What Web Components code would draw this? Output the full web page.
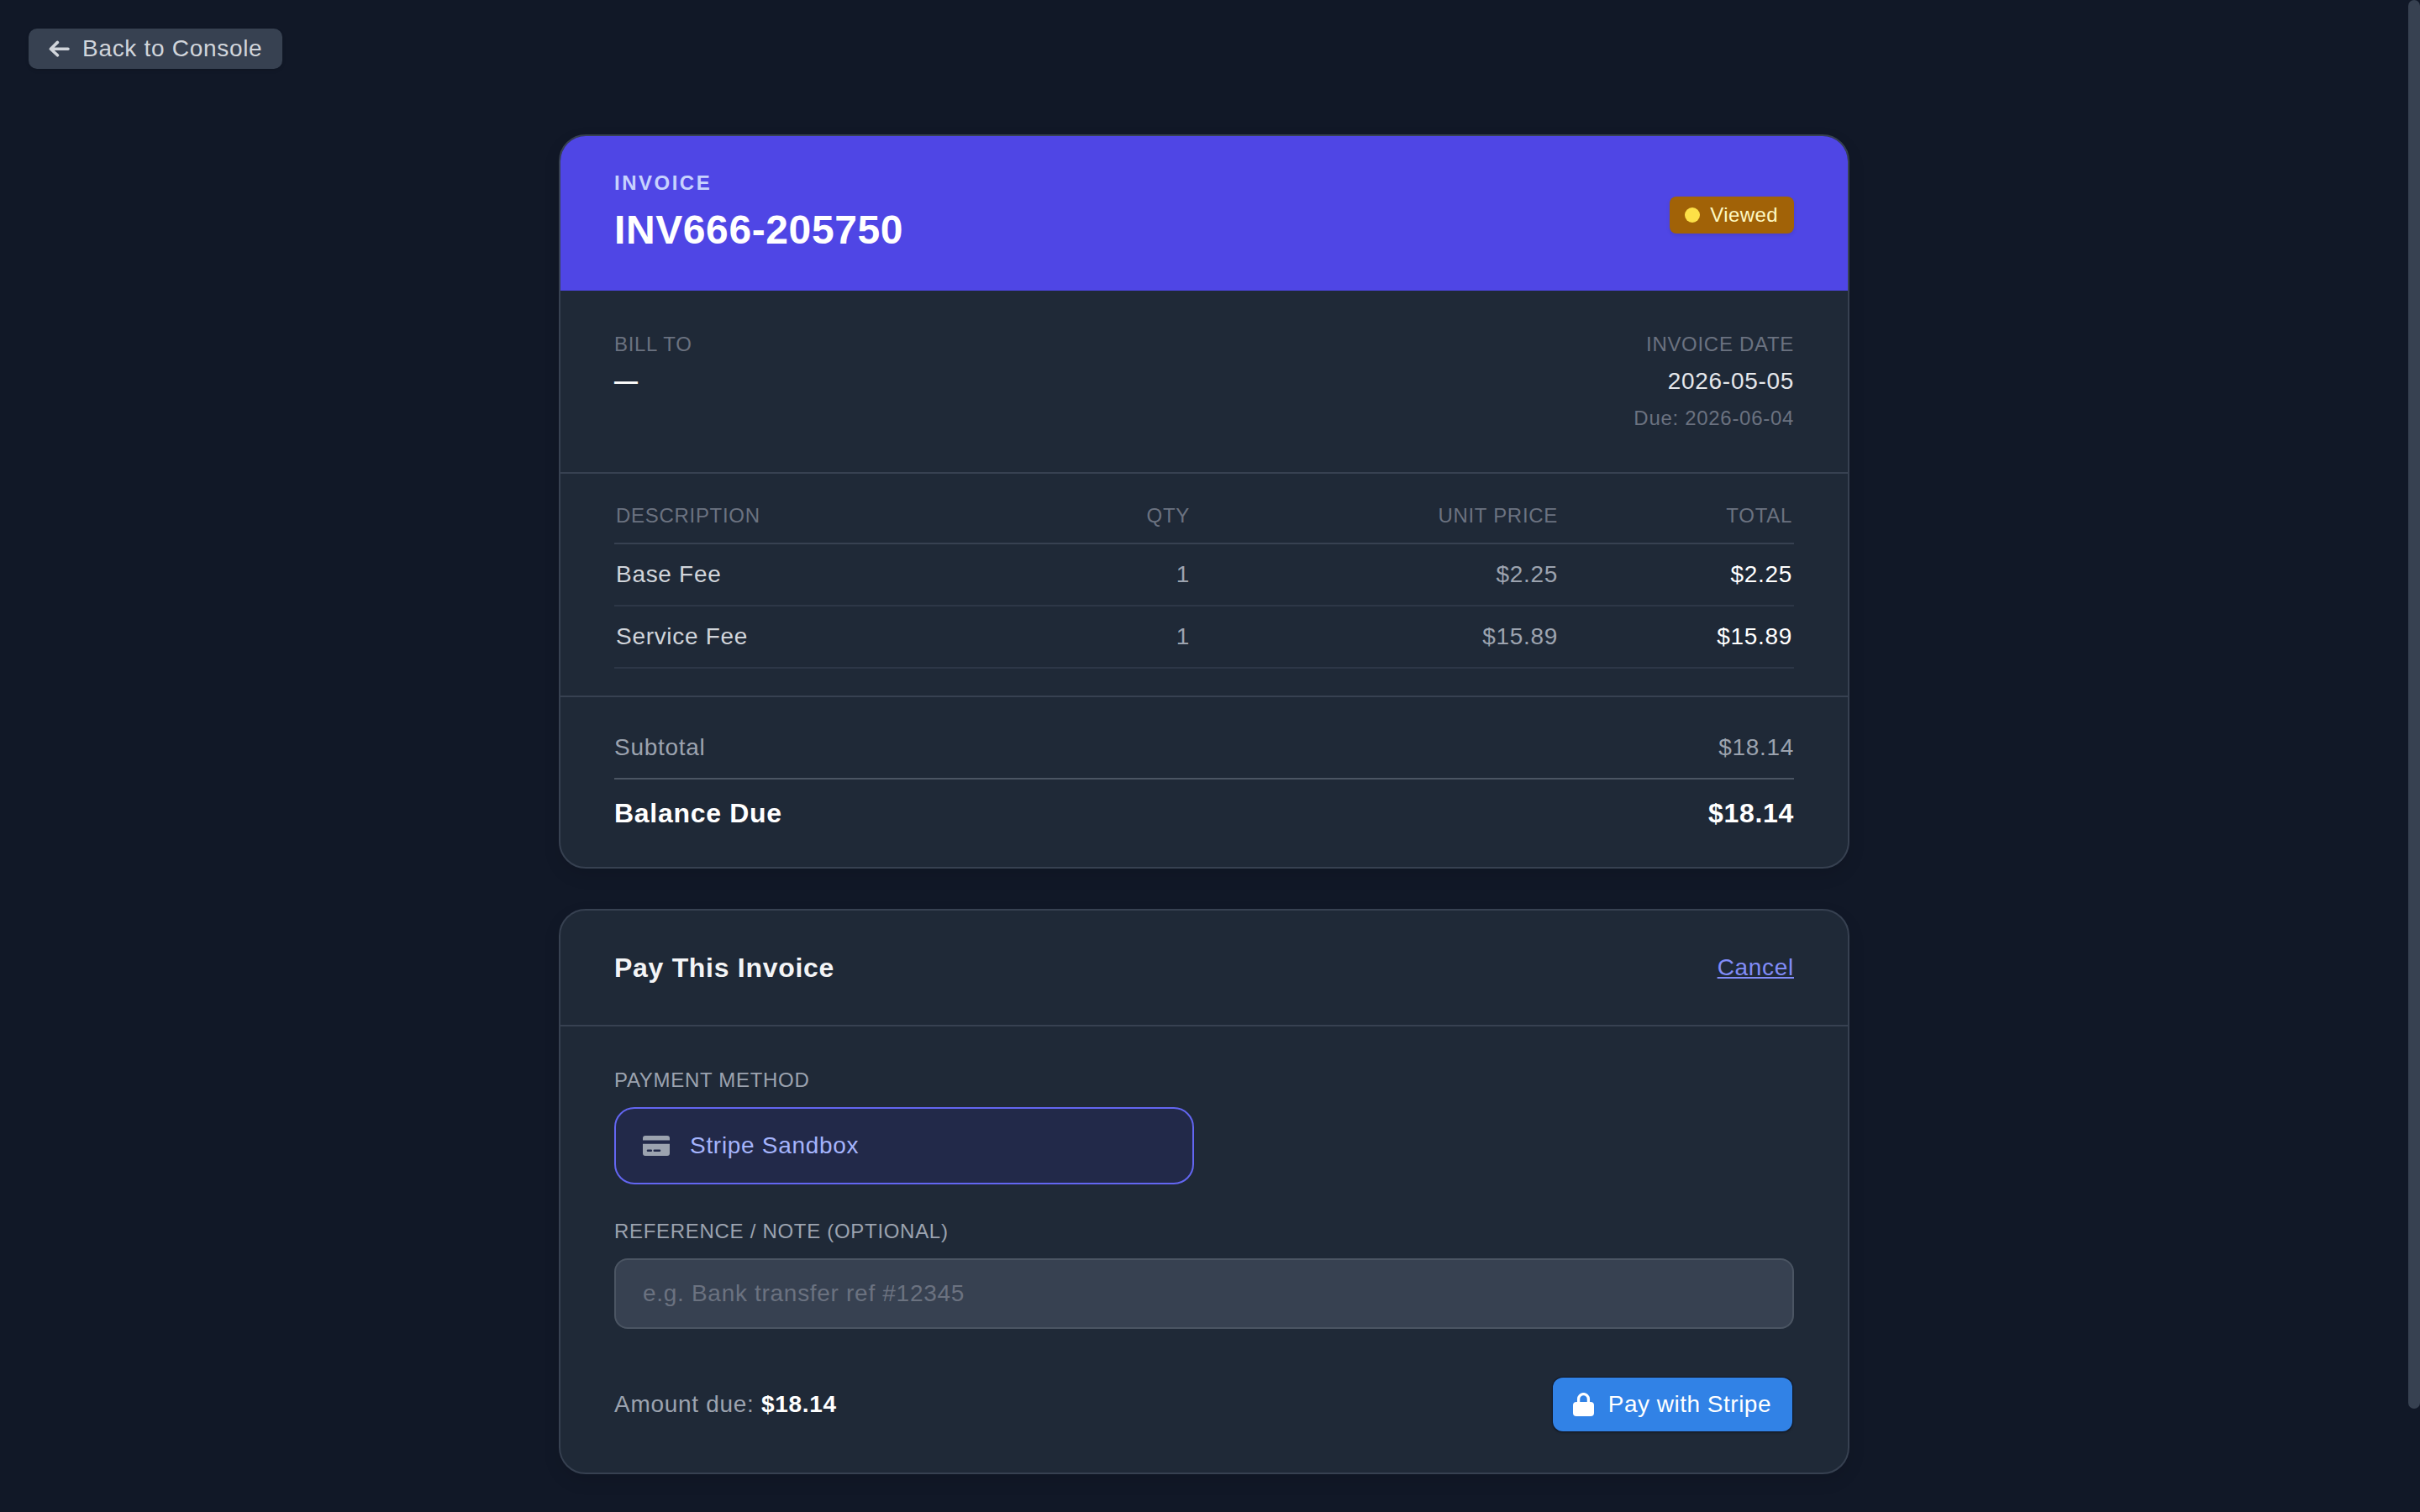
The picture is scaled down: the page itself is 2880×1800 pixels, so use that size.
<!DOCTYPE html>
<html lang="en">
<head>
<meta charset="utf-8">
<title>Invoice INV666-205750</title>
<style>
  html, body { margin: 0; height: 100%; overflow: hidden; background: #111827; }
  body { font-family: "Liberation Sans", Arial, sans-serif; color: #d1d5db; letter-spacing: 0.7px; }
</style>
</head>
<body>
<invoice-page>
  <back-link slot="back">Back to Console</back-link>

  <invoice-card number="INV666-205750" status="Viewed">
    <bill-summary date="2026-05-05" due="2026-06-04"></bill-summary>
    <line-table>
      <line-row desc="Base Fee" qty="1" price="$2.25" total="$2.25"></line-row>
      <line-row desc="Service Fee" qty="1" price="$15.89" total="$15.89"></line-row>
    </line-table>
    <invoice-totals subtotal="$18.14" balance="$18.14"></invoice-totals>
  </invoice-card>

  <pay-panel amount="$18.14">
    <pay-method>Stripe Sandbox</pay-method>
  </pay-panel>
</invoice-page>

<script>
const ICONS = {
  arrow: `<svg width="25" height="20" viewBox="0 0 25 20" fill="none" stroke="currentColor" stroke-width="3.6" stroke-linecap="round" stroke-linejoin="round" aria-hidden="true"><path d="M23 10.2H3.2M10.4 2.4 2.4 10.2l8 7.6"/></svg>`,
  card: `<svg width="32" height="24" viewBox="0 0 32 24" fill="currentColor" aria-hidden="true"><path d="M3 0h26a3 3 0 0 1 3 3v2.4H0V3a3 3 0 0 1 3-3z"/><path fill-rule="evenodd" d="M0 9.7h32V21a3 3 0 0 1-3 3H3a3 3 0 0 1-3-3V9.7zM6 16.4a1.3 1.3 0 0 0 0 2.6h3.8a1.3 1.3 0 0 0 0-2.6H6zm7.8 0a1.3 1.3 0 0 0 0 2.6H20a1.3 1.3 0 0 0 0-2.6h-6.2z"/></svg>`,
  lock: `<svg width="25" height="28" viewBox="0 0 25 28" aria-hidden="true"><rect y="11" width="25" height="17" rx="4" fill="currentColor"/><path d="M6.6 12V7.5a5.9 5.9 0 0 1 11.8 0V12" fill="none" stroke="currentColor" stroke-width="3.3"/></svg>`,
};

class ShadowBase extends HTMLElement {
  constructor() {
    super();
    this.attachShadow({ mode: 'open' });
  }

  connectedCallback() {
    this.shadowRoot.innerHTML = `<style>${this.constructor.CSS}</style>${this.html()}`;
  }

  attr(name) {
    return this.getAttribute(name) || '';
  }
}

class InvoicePage extends ShadowBase {
  html() {
    return `
      <div class="back"><slot name="back"></slot></div>
      <main><slot></slot></main>
      <div class="thumb"></div>
    `;
  }

  static get CSS() {
    return `
      :host { display: block; height: 100%; padding-right: 14px; box-sizing: border-box; position: relative; }
      .back { padding: 34px 0 0 34px; height: 160px; box-sizing: border-box; }
      main { width: 1536px; margin: 0 auto; display: flex; flex-direction: column; gap: 48px; }
      .thumb { position: absolute; top: 0; right: 0; width: 14px; height: 1677px; background: #374151; border-radius: 7px; }
    `;
  }
}

class BackLink extends ShadowBase {
  html() {
    return `${ICONS.arrow}<span><slot></slot></span>`;
  }

  static get CSS() {
    return `
      :host {
        display: inline-flex; align-items: center; gap: 15px; box-sizing: border-box;
        height: 48px; padding: 0 24px; border-radius: 10px;
        background: #374151; color: #d1d5db; font-size: 28px;
        box-shadow: 0 2px 4px rgba(0, 0, 0, 0.1);
      }
      svg { flex: none; }
    `;
  }
}

class InvoiceCard extends ShadowBase {
  html() {
    return `
      <header>
        <div>
          <div class="eyebrow">INVOICE</div>
          <h1>${this.attr('number')}</h1>
        </div>
        <status-badge>${this.attr('status')}</status-badge>
      </header>
      <slot></slot>
    `;
  }

  static get CSS() {
    return `
      :host {
        display: block; background: #1f2937; border: 2px solid #374151; border-radius: 32px;
        overflow: hidden; box-shadow: 0 8px 20px rgba(0, 0, 0, 0.1);
      }
      header {
        height: 184px; box-sizing: border-box; padding: 0 64px 4px; background: #4f46e5;
        display: flex; align-items: center; justify-content: space-between;
      }
      .eyebrow { font-size: 24px; line-height: 32px; font-weight: 600; letter-spacing: 2.5px; color: #c7d2fe; }
      h1 { margin: 12px 0 0; font-size: 48px; line-height: 56px; font-weight: 700; letter-spacing: 0.6px; color: #fff; }
      status-badge { margin-top: 8px; }
    `;
  }
}

class StatusBadge extends ShadowBase {
  html() {
    return `<i></i><slot></slot>`;
  }

  static get CSS() {
    return `
      :host {
        display: inline-flex; align-items: center; gap: 12px; box-sizing: border-box;
        height: 44px; padding: 0 19px 0 18px; border-radius: 8px;
        background: #a16207; color: #fef9c3; font-size: 24px; letter-spacing: 0.4px;
        box-shadow: 0 2px 4px rgba(0, 0, 0, 0.1);
      }
      i { width: 18px; height: 18px; border-radius: 50%; background: #fde047; }
    `;
  }
}

class BillSummary extends ShadowBase {
  html() {
    return `
      <div>
        <div class="label">BILL TO</div>
        <div class="value white">—</div>
      </div>
      <div class="right">
        <div class="label">INVOICE DATE</div>
        <div class="value">${this.attr('date')}</div>
        <div class="due">Due: ${this.attr('due')}</div>
      </div>
    `;
  }

  static get CSS() {
    return `
      :host {
        display: flex; justify-content: space-between; box-sizing: border-box; height: 218px;
        padding: 48px 64px 0; border-bottom: 2px solid #374151;
      }
      .right { text-align: right; }
      .label { font-size: 24px; line-height: 32px; color: #6b7280; }
      .value { font-size: 28px; line-height: 36px; margin-top: 10px; color: #e5e7eb; }
      .white { color: #fff; font-weight: 700; }
      .due { font-size: 24px; line-height: 32px; margin-top: 10px; color: #6b7280; }
    `;
  }
}

class LineTable extends ShadowBase {
  html() {
    return `
      <div class="head">
        <span>DESCRIPTION</span><span class="r">QTY</span><span class="r">UNIT PRICE</span><span class="r">TOTAL</span>
      </div>
      <slot></slot>
    `;
  }

  static get CSS() {
    return `
      :host { display: block; padding: 24px 64px 32px; border-bottom: 2px solid #374151; }
      .head {
        display: grid; grid-template-columns: 1fr 120px 438px 279px; align-items: center;
        height: 60px; padding: 0 2px 7px; box-sizing: border-box; border-bottom: 2px solid #374151;
        font-size: 24px; color: #6b7280;
      }
      .r { text-align: right; }
    `;
  }
}

class LineRow extends ShadowBase {
  html() {
    return `
      <span class="desc">${this.attr('desc')}</span>
      <span class="r qty">${this.attr('qty')}</span>
      <span class="r price">${this.attr('price')}</span>
      <span class="r total">${this.attr('total')}</span>
    `;
  }

  static get CSS() {
    return `
      :host {
        display: grid; grid-template-columns: 1fr 120px 438px 279px; align-items: center;
        height: 74px; box-sizing: border-box; padding: 0 2px; border-bottom: 2px solid rgba(55, 65, 81, 0.6);
        font-size: 28px;
      }
      .r { text-align: right; }
      .desc { color: #d1d5db; }
      .qty, .price { color: #9ca3af; }
      .total { color: #fff; }
    `;
  }
}

class InvoiceTotals extends ShadowBase {
  html() {
    return `
      <div class="row sub"><span>Subtotal</span><span>${this.attr('subtotal')}</span></div>
      <div class="row due"><span>Balance Due</span><span>${this.attr('balance')}</span></div>
    `;
  }

  static get CSS() {
    return `
      :host { display: block; padding: 24px 64px 0; height: 202px; box-sizing: border-box; }
      .row { display: flex; justify-content: space-between; align-items: center; box-sizing: border-box; }
      .sub { height: 74px; font-size: 28px; color: #9ca3af; border-bottom: 2px solid #4b5563; }
      .due { height: 80px; font-size: 32px; font-weight: 700; color: #fff; }
    `;
  }
}

class PayPanel extends ShadowBase {
  html() {
    return `
      <header><h2>Pay This Invoice</h2><a href="#">Cancel</a></header>
      <section>
        <div class="label">PAYMENT METHOD</div>
        <div class="methods"><slot></slot></div>
        <div class="label second">REFERENCE / NOTE (OPTIONAL)</div>
        <input type="text" placeholder="e.g. Bank transfer ref #12345">
        <footer>
          <span class="amount">Amount due: <b>${this.attr('amount')}</b></span>
          <button type="button">${ICONS.lock}<span>Pay with Stripe</span></button>
        </footer>
      </section>
    `;
  }

  static get CSS() {
    return `
      :host {
        display: block; background: #1f2937; border: 2px solid #374151; border-radius: 32px;
        box-shadow: 0 8px 20px rgba(0, 0, 0, 0.1);
      }
      header {
        display: flex; justify-content: space-between; align-items: center; box-sizing: border-box;
        height: 138px; padding: 0 64px; border-bottom: 2px solid #374151;
      }
      h2 { margin: 0; font-size: 32px; font-weight: 700; color: #f3f4f6; }
      a { font-size: 28px; color: #818cf8; }
      section { padding: 48px 64px 49px; }
      .label { font-size: 24px; line-height: 32px; color: #9ca3af; }
      .second { margin-top: 40px; }
      .methods { display: grid; grid-template-columns: 1fr 1fr; gap: 24px; margin-top: 16px; }
      input {
        display: block; width: 100%; height: 84px; margin-top: 16px; box-sizing: border-box;
        padding: 0 32px; background: #374151; border: 2px solid #4b5563; border-radius: 16px;
        font: inherit; font-size: 28px; letter-spacing: inherit; color: #fff; outline: none;
      }
      input::placeholder { color: #6b7280; opacity: 1; }
      footer { display: flex; justify-content: space-between; align-items: center; margin-top: 58px; }
      .amount { font-size: 28px; color: #9ca3af; }
      b { color: #fff; }
      button {
        display: inline-flex; align-items: center; gap: 17px; height: 64px; padding: 0 25px 0 24px; margin-right: 2px;
        border: 0; border-radius: 12px; background: #3182e6; color: #fff;
        font: inherit; font-size: 28px; letter-spacing: 0.5px;
        box-shadow: 0 0 0 1px #111827, 0 1px 3px rgba(0, 0, 0, 0.5);
      }
      svg { flex: none; }
    `;
  }
}

class PayMethod extends ShadowBase {
  html() {
    return `${ICONS.card}<span><slot></slot></span>`;
  }

  static get CSS() {
    return `
      :host {
        display: flex; align-items: center; gap: 24px; box-sizing: border-box; height: 92px;
        padding: 0 32px; background: #222949; border: 2px solid #6366f1; border-radius: 24px;
        font-size: 28px; color: #a5b4fc;
      }
      svg { color: #9ca3af; flex: none; }
    `;
  }
}

customElements.define('invoice-page', InvoicePage);
customElements.define('back-link', BackLink);
customElements.define('invoice-card', InvoiceCard);
customElements.define('status-badge', StatusBadge);
customElements.define('bill-summary', BillSummary);
customElements.define('line-table', LineTable);
customElements.define('line-row', LineRow);
customElements.define('invoice-totals', InvoiceTotals);
customElements.define('pay-panel', PayPanel);
customElements.define('pay-method', PayMethod);
</script>
</body>
</html>
